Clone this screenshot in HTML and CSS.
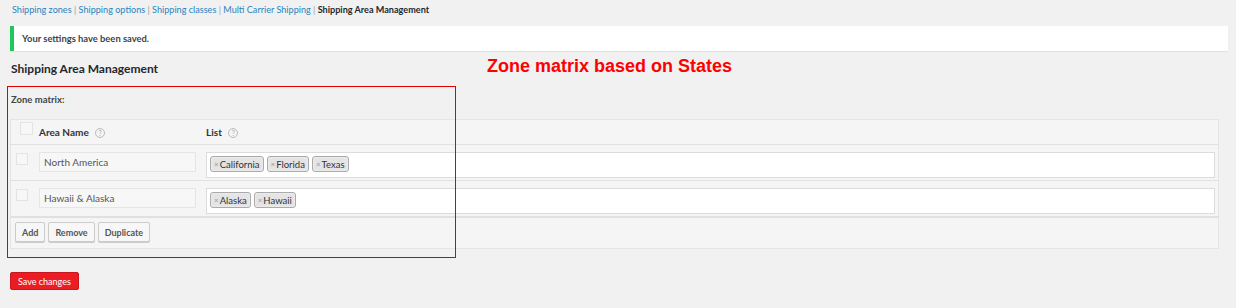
FILE: index.html
```html
<!DOCTYPE html>
<html lang="en">
<head>
    <meta charset="UTF-8">
    <title>Shipping Area Management</title>
    <link rel="stylesheet" href="styles.css">
</head>
<body>
    <div class="wrap">
        <!-- sub navigation -->
        <ul class="subsubsub">
            <li><a href="#">Shipping zones</a> | </li>
            <li><a href="#">Shipping options</a> | </li>
            <li><a href="#">Shipping classes</a> | </li>
            <li><a href="#">Multi Carrier Shipping</a> | </li>
            <li><span class="current">Shipping Area Management</span></li>
        </ul>

        <div class="notice">
            <p>Your settings have been saved.</p>
        </div>

        <h2 class="page-title">Shipping Area Management</h2>

        <div class="zone-label">Zone matrix:</div>

        <table class="zone-table">
            <thead>
                <tr>
                    <th class="check-col"><span class="checkbox"></span></th>
                    <th class="name-col">Area Name <span class="help">?</span></th>
                    <th>List <span class="help">?</span></th>
                </tr>
            </thead>
            <tbody>
                <tr>
                    <td class="check-col"><span class="checkbox"></span></td>
                    <td class="name-col"><div class="text-input">North America</div></td>
                    <td>
                        <div class="select-box">
                            <span class="tag"><span class="x">×</span>California</span>
                            <span class="tag"><span class="x">×</span>Florida</span>
                            <span class="tag"><span class="x">×</span>Texas</span>
                        </div>
                    </td>
                </tr>
                <tr>
                    <td class="check-col"><span class="checkbox"></span></td>
                    <td class="name-col"><div class="text-input">Hawaii &amp; Alaska</div></td>
                    <td>
                        <div class="select-box">
                            <span class="tag"><span class="x">×</span>Alaska</span>
                            <span class="tag"><span class="x">×</span>Hawaii</span>
                        </div>
                    </td>
                </tr>
            </tbody>
            <tfoot>
                <tr>
                    <td colspan="3">
                        <div class="actions">
                            <button class="btn">Add</button>
                            <button class="btn">Remove</button>
                            <button class="btn">Duplicate</button>
                        </div>
                    </td>
                </tr>
            </tfoot>
        </table>

        <button class="btn-save">Save changes</button>

        <!-- annotation overlay -->
        <div class="note-title">Zone matrix based on States</div>
        <div class="note-box"></div>
    </div>
</body>
</html>
```

FILE: styles.css
```css
body {
    margin: 0;
    padding: 0;
    background: #f1f1f1;
    color: #444;
    font-family: 'Lato', 'Noto Sans', sans-serif;
    font-size: 10px;
}

.wrap {
    position: relative;
    padding: 0 8px 0 10px;
}

.subsubsub {
    list-style: none;
    margin: 0;
    padding: 4px 0 0 2px;
    display: flex;
    font-size: 9.1px;
    line-height: 11px;
    color: #999;
}

.subsubsub li {
    white-space: pre;
}

.subsubsub a {
    color: #2a83c0;
    text-decoration: none;
}

.subsubsub .current {
    color: #23282d;
    font-weight: bold;
}

.notice {
    margin-top: 11px;
    background: #fff;
    border-left: 4px solid #1ec85a;
    box-shadow: 0 1px 1px rgba(0, 0, 0, 0.06);
    height: 25px;
    display: flex;
    align-items: center;
    padding-left: 8px;
}

.notice p {
    margin: 0;
    font-weight: bold;
    font-size: 9.4px;
    color: #3c434a;
}

.page-title {
    margin: 10px 0 0 1px;
    font-size: 12px;
    line-height: 16px;
    color: #23282d;
}

.zone-label {
    margin: 18px 0 0 1px;
    font-weight: bold;
    font-size: 9.5px;
    line-height: 10px;
    color: #444;
}

.zone-table {
    margin-top: 14px;
    width: 1209px;
    border-collapse: collapse;
    background: #f5f5f5;
    border: 1px solid #e5e5e5;
}

.zone-table th {
    height: 24px;
    text-align: left;
    font-weight: bold;
    color: #333;
    border-bottom: 1px solid #e1e1e1;
    padding: 0;
}

.zone-table td {
    padding: 7px 0 0 0;
    vertical-align: top;
    border-bottom: 1px solid #e1e1e1;
    height: 28px;
}

.zone-table tbody tr:last-child td {
    border-bottom: 2px solid #e0e0e0;
}

.zone-table .check-col {
    width: 28px;
    padding-left: 0;
}

.checkbox {
    display: block;
    width: 10px;
    height: 10px;
    margin: 1px 0 0 5px;
    border: 1px solid #e3e3e3;
    background: #f7f7f7;
}

th .checkbox {
    width: 11px;
    height: 11px;
    margin: 2px 0 0 9px;
}

th.check-col {
    vertical-align: top;
}

.name-col {
    width: 167px;
}

.help {
    display: inline-block;
    width: 8px;
    height: 8px;
    border: 1px solid #bbb;
    border-radius: 50%;
    color: #aaa;
    font-size: 7px;
    line-height: 8px;
    text-align: center;
    font-weight: normal;
    margin-left: 4px;
    vertical-align: 0;
}

.text-input {
    width: 157px;
    height: 20px;
    border: 1px solid #e5e5e5;
    background: #f7f7f7;
    box-sizing: border-box;
    padding-left: 4px;
    line-height: 18px;
    color: #555;
}

.select-box {
    width: 1009px;
    height: 26px;
    box-sizing: border-box;
    border: 1px solid #dcdcdc;
    background: #fff;
    display: flex;
    align-items: flex-start;
    gap: 3px;
    padding: 3px 0 0 3px;
}

.tag {
    display: inline-flex;
    align-items: center;
    height: 16px;
    box-sizing: border-box;
    padding: 0 3px 0 3px;
    background: #e4e4e4;
    border: 1px solid #aaa;
    border-radius: 3px;
    box-shadow: inset 0 0 2px #fff;
    color: #333;
    font-size: 9.5px;
}

.tag .x {
    color: #999;
    font-size: 8px;
    margin-right: 1px;
}

.zone-table tfoot td {
    height: 26px;
    padding: 4px 0 0 4px;
    border-bottom: none;
}

.actions {
    display: flex;
    gap: 3px;
}

.btn {
    height: 20px;
    padding: 0 6px;
    background: #f7f7f7;
    border: 1px solid #ccc;
    border-radius: 2px;
    box-shadow: 0 1px 0 #ccc;
    color: #555;
    font-family: inherit;
    font-weight: bold;
    font-size: 9px;
    cursor: pointer;
}

.btn-save {
    margin-top: 23px;
    height: 18px;
    padding: 0 7px;
    background: #ec1c24;
    border: 1px solid #c9151c;
    border-radius: 2px;
    color: #fff;
    font-family: inherit;
    font-size: 9px;
    cursor: pointer;
}

.note-title {
    position: absolute;
    top: 56px;
    left: 487px;
    font-family: 'Liberation Sans', Arial, sans-serif;
    font-weight: bold;
    font-size: 18px;
    color: #ff0000;
}

.note-box {
    position: absolute;
    top: 86px;
    left: 7px;
    width: 447px;
    height: 170px;
    border: 1px solid #e00000;
}
```
